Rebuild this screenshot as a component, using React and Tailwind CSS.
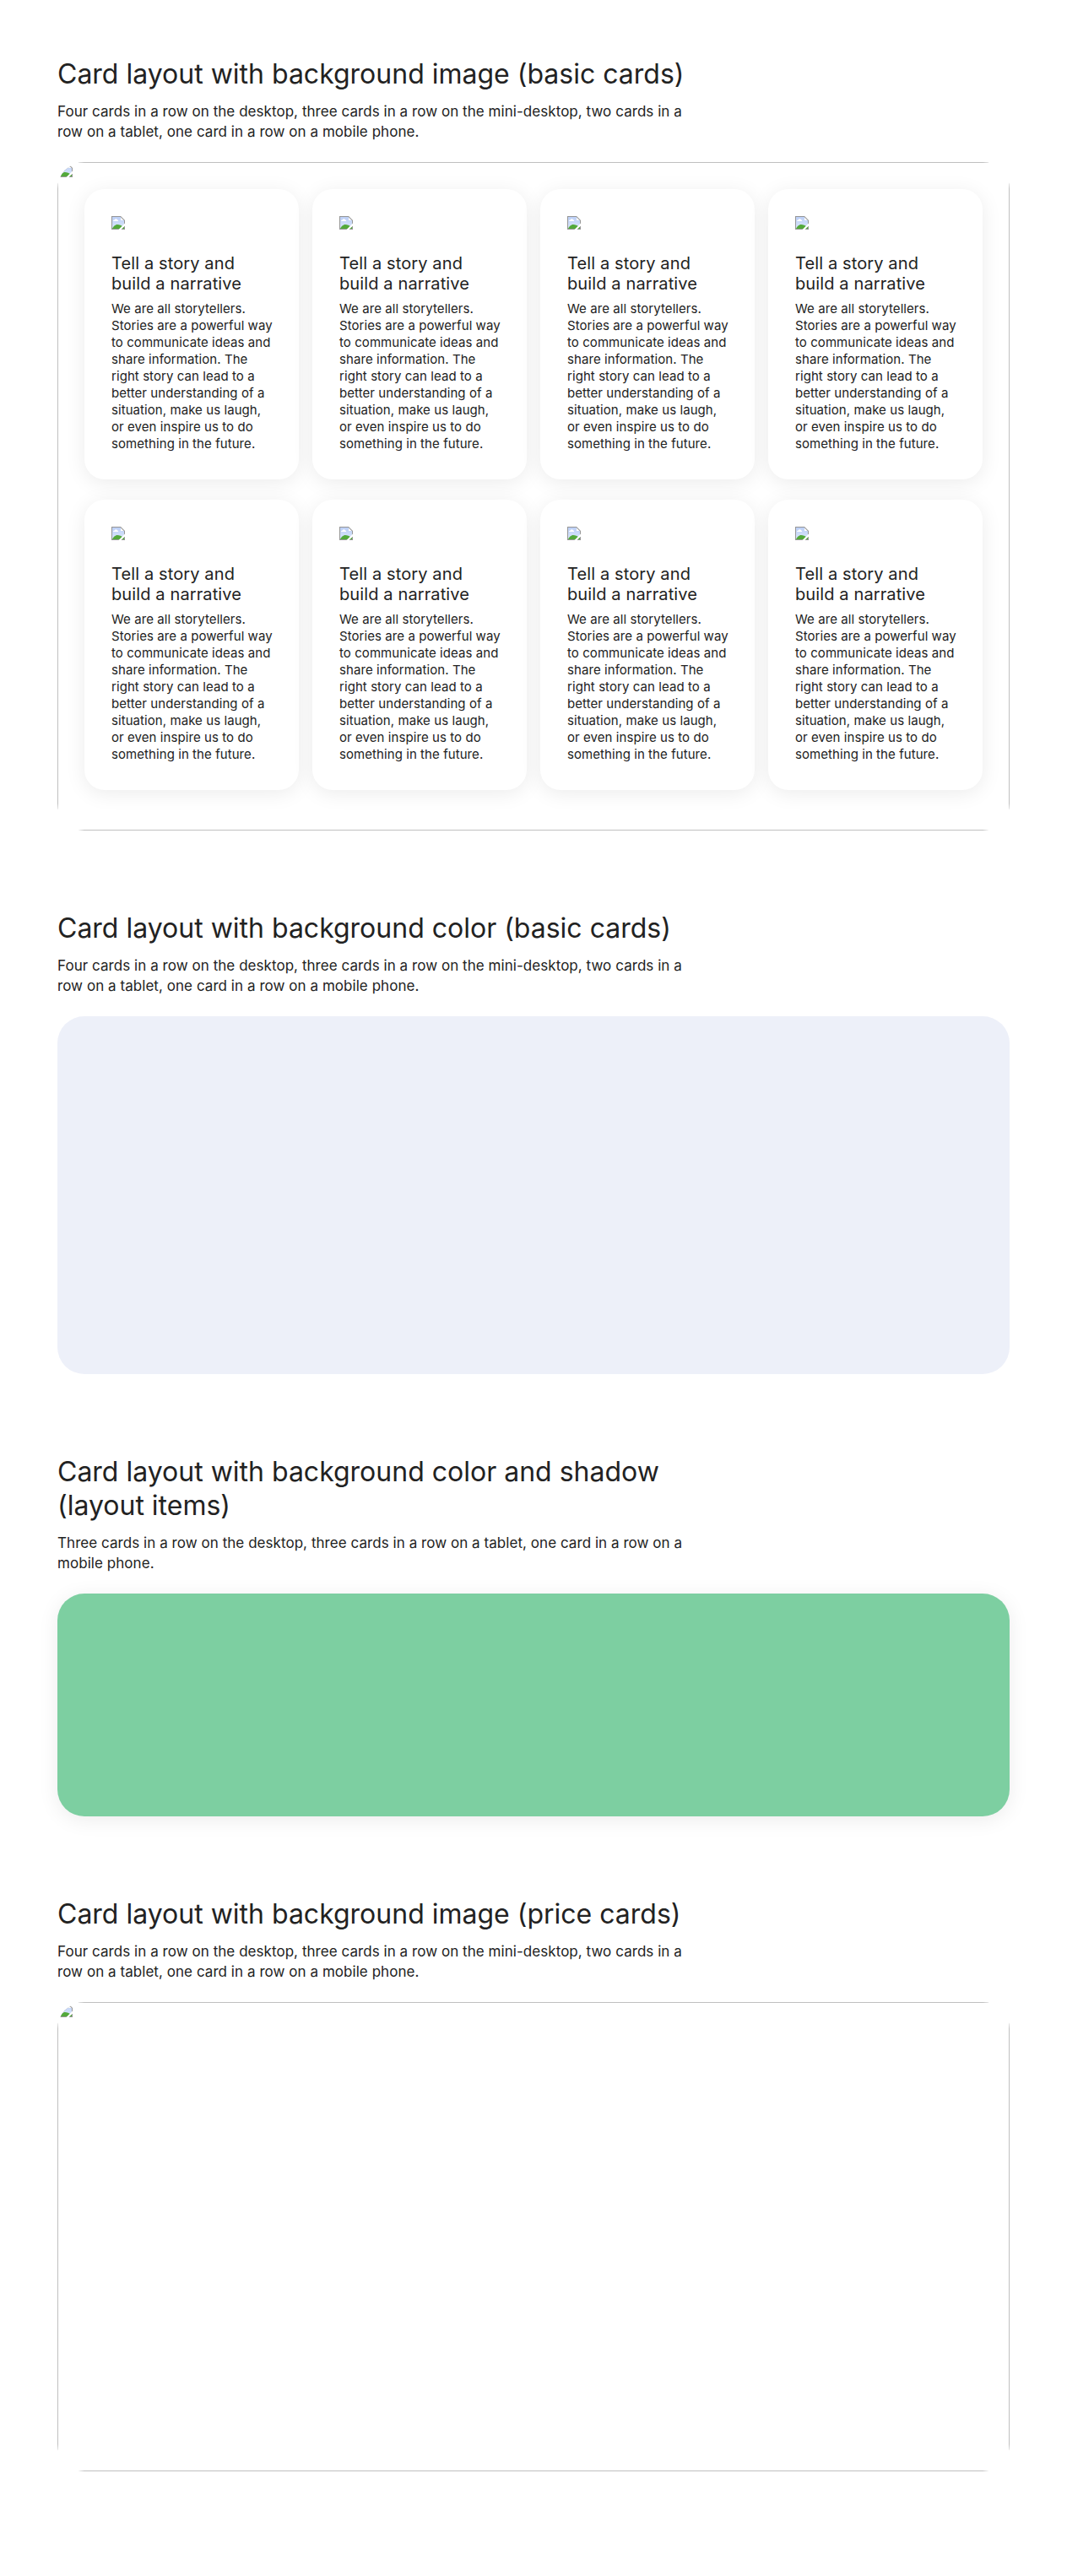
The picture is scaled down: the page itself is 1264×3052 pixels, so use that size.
function BrokenImage() {
  return (
    <svg width="16" height="16" viewBox="0 0 16 16" className="block shrink-0">
      <defs>
        <linearGradient id="sky" x2="0" y2="1">
          <stop stopColor="#bccff6" />
          <stop offset="1" stopColor="#dbe6fb" />
        </linearGradient>
      </defs>
      <path d="M0 0h11l5 5v11H0z" fill="#969696" />
      <path d="M1 1h10v4h4v10H1z" fill="url(#sky)" />
      <path d="M11 1.400v3.600h3.600z" fill="#fff" />
      <path d="M2 6q0-1.300 1.400-1.300Q3.800 3.200 5.200 3.200T7 4.600Q8.200 4.600 8.200 6z" fill="#fff" />
      <path d="M1 15c1-2.500 3.600-5 6-5s4.600 1 8 3v2z" fill="#53a93a" />
      <path d="M8.500 16L16 8.500v3L11.500 16z" fill="#fff" />
    </svg>
  );
}

function Section({ title, text, className, children }) {
  return (
    <section className={className}>
      <h2 className="w-[752px] text-[32px] leading-10">{title}</h2>
      <p className="mt-3 mb-6 w-[752px] text-[17px] leading-6 tracking-[0.05px]">{text}</p>
      {children}
    </section>
  );
}

function ImagePanel({ className, children }) {
  return (
    <div className={className}>
      <div className="absolute inset-0 overflow-hidden rounded-[32px]">
        <div className="h-full border border-[#c0c0c0] p-px">
          <BrokenImage />
        </div>
      </div>
      <div className="relative">{children}</div>
    </div>
  );
}

const four =
  "Four cards in a row on the desktop, three cards in a row on the mini-desktop, two cards in a row on a tablet, one card in a row on a mobile phone.";

export default function App() {
  return (
    <main className="h-[3052px] bg-white px-[68px] pt-[68px] font-['Inter',sans-serif] text-[#222222]">
      <Section title="Card layout with background image (basic cards)" text={four} className="h-[1012px]">
        <ImagePanel className="relative h-[792px]">
          <div className="grid grid-cols-4 gap-x-4 gap-y-6 p-8">
            {Array.from({ length: 8 }, (_, i) => (
              <article key={i} className="h-[344px] rounded-3xl bg-white p-8 shadow-[0_4px_24px_rgba(0,0,0,0.08)]">
                <BrokenImage />
                <h3 className="mt-7 text-xl leading-6 tracking-[0.12px]">Tell a story and build a narrative</h3>
                <p className="mt-2 -mr-px text-[15px] leading-5 tracking-[0.07px]">
                  We are all storytellers. Stories are a powerful way to communicate ideas and share information. The right story can lead to a better understanding of a situation, make us laugh, or even inspire us to do something in the future.
                </p>
              </article>
            ))}
          </div>
        </ImagePanel>
      </Section>
      <Section title="Card layout with background color (basic cards)" text={four} className="h-[644px]">
        <div className="h-[424px] rounded-[32px] bg-[#edf0f9]" />
      </Section>
      <Section
        title="Card layout with background color and shadow (layout items)"
        text="Three cards in a row on the desktop, three cards in a row on a tablet, one card in a row on a mobile phone."
        className="h-[524px]"
      >
        <div className="h-[264px] rounded-[32px] bg-[#7dcfa1] shadow-[0_4px_24px_rgba(0,0,0,0.08)]" />
      </Section>
      <Section title="Card layout with background image (price cards)" text={four}>
        <ImagePanel className="relative h-[556px]" />
      </Section>
    </main>
  );
}
